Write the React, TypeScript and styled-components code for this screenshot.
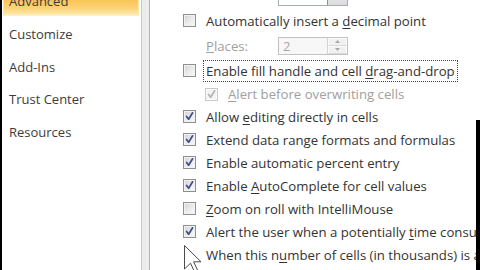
import React from 'react';
import styled, { createGlobalStyle } from 'styled-components';

const GlobalStyle = createGlobalStyle`
  html, body {
    margin: 0;
    padding: 0;
    background: #ffffff;
    overflow: hidden;
  }
  body {
    font-family: 'Open Sans', 'Noto Sans', Arial, sans-serif;
  }
`;

type Option = {
  label: React.ReactNode;
  checked?: boolean;
  disabled?: boolean;
  indent?: boolean;
  focused?: boolean;
  noBox?: boolean;
  h: number;
};

const NAV = ['Advanced', 'Customize', 'Add-Ins', 'Trust Center', 'Resources'];

const OPTIONS: Option[] = [
  {
    label: (
      <>
        Automatically insert a <u>d</u>ecimal point
      </>
    ),
    h: 25,
  },
];

const LIST: Option[] = [
  {
    label: (
      <>
        Enable fill handle and cell <u>d</u>rag-and-drop
      </>
    ),
    focused: true,
    h: 25,
  },
  {
    label: (
      <>
        <u>A</u>lert before overwriting cells
      </>
    ),
    checked: true,
    disabled: true,
    indent: true,
    h: 22,
  },
  {
    label: (
      <>
        Allow <u>e</u>diting directly in cells
      </>
    ),
    checked: true,
    h: 23,
  },
  { label: 'Extend data range formats and formulas', checked: true, h: 23 },
  { label: 'Enable automatic percent entry', checked: true, h: 23 },
  {
    label: (
      <>
        Enable <u>A</u>utoComplete for cell values
      </>
    ),
    checked: true,
    h: 23,
  },
  {
    label: (
      <>
        <u>Z</u>oom on roll with IntelliMouse
      </>
    ),
    h: 23,
  },
  {
    label: (
      <>
        Alert the user when a potentially <u>t</u>ime consuming operation occurs
      </>
    ),
    checked: true,
    h: 23,
  },
  {
    label: (
      <>
        When this n<u>u</u>mber of cells (in thousands) is affected:
      </>
    ),
    noBox: true,
    h: 23,
  },
];

const Check = ({ checked, disabled }: { checked?: boolean; disabled?: boolean }) => (
  <Box $disabled={disabled}>
    {checked && (
      <svg width="11" height="11" viewBox="0 0 11 11">
        <path
          d="M2.6 5.4 L4.6 8.2 L8.6 1.8"
          fill="none"
          stroke={disabled ? '#b4b4b4' : '#3f4f86'}
          strokeWidth="1.7"
          strokeLinejoin="round"
          strokeLinecap="round"
        />
      </svg>
    )}
  </Box>
);

const OptionRow = ({ o }: { o: Option }) => (
  <Row $h={o.h} $indent={o.indent}>
    {o.noBox ? <BoxSpace /> : <Check checked={o.checked} disabled={o.disabled} />}
    <Label $disabled={o.disabled} $focused={o.focused}>
      {o.label}
    </Label>
  </Row>
);

const Spinner = ({ value, dropdown }: { value: string; dropdown?: boolean }) => (
  <Spin $dropdown={dropdown}>
    <SpinValue $dropdown={dropdown}>{value}</SpinValue>
    {dropdown ? (
      <DropButton>
        <svg width="7" height="4" viewBox="0 0 7 4">
          <path d="M0 0 L7 0 L3.5 4 Z" fill="#333" />
        </svg>
      </DropButton>
    ) : (
      <SpinButtons>
        <SpinHalf>
          <svg width="5" height="3" viewBox="0 0 5 3">
            <path d="M0 3 L5 3 L2.5 0 Z" fill="#a8a8a8" />
          </svg>
        </SpinHalf>
        <SpinHalf>
          <svg width="5" height="3" viewBox="0 0 5 3">
            <path d="M0 0 L5 0 L2.5 3 Z" fill="#a8a8a8" />
          </svg>
        </SpinHalf>
      </SpinButtons>
    )}
  </Spin>
);

export default function App() {
  return (
    <>
      <GlobalStyle />
      <Window>
        <LeftEdge />
        <Sidebar>
          <NavList>
            {NAV.map((n, i) => (
              <NavItem key={n} $active={i === 0}>
                {n}
              </NavItem>
            ))}
          </NavList>
        </Sidebar>
        <Splitter />
        <Content>
          <Rows>
            <Row $h={29}>
              <BoxSpace />
              <FieldLabel>Direction:</FieldLabel>
              <Spinner value="Down" dropdown />
            </Row>
            {OPTIONS.map((o, i) => (
              <OptionRow key={i} o={o} />
            ))}
            <Row $h={25}>
              <BoxSpace />
              <FieldLabel $disabled>
                <u>P</u>laces:
              </FieldLabel>
              <Spinner value="2" />
            </Row>
            {LIST.map((o, i) => (
              <OptionRow key={i} o={o} />
            ))}
          </Rows>
          <Pointer width="18" height="28" viewBox="0 0 18 28">
            <path
              d="M0.5 0.5 L0.5 24 L6.5 18.2 L10.6 27 L13.8 25.6 L9.6 16.8 L17 16.8 Z"
              fill="#ffffff"
              stroke="#4a4a4a"
              strokeWidth="1"
              strokeLinejoin="miter"
            />
          </Pointer>
        </Content>
        <RightEdge />
      </Window>
    </>
  );
}

const Window = styled.div`
  display: flex;
  width: 480px;
  height: 270px;
  overflow: hidden;
  background: #ffffff;
`;

const LeftEdge = styled.div`
  width: 2px;
  flex: none;
  background: #000000;
`;

const Sidebar = styled.div`
  width: 139px;
  flex: none;
  background: #ffffff;
  overflow: hidden;
`;

const NavList = styled.div`
  display: flex;
  flex-direction: column;
  margin-top: -14px;
`;

const NavItem = styled.div<{ $active?: boolean }>`
  height: ${(p) => (p.$active ? '30px' : '32.5px')};
  margin-bottom: ${(p) => (p.$active ? '2px' : '0')};
  display: flex;
  align-items: center;
  padding-left: 6px;
  margin-left: 1px;
  margin-right: 2px;
  font-size: 13px;
  color: #3c3c3c;
  border-radius: 0 0 2px 2px;
  background: ${(p) =>
    p.$active
      ? 'linear-gradient(to bottom, #f8bb45 0%, #f9c352 45%, #fbd47a 75%, #fde6a8 92%, #fff3d2 100%)'
      : 'transparent'};
  box-shadow: ${(p) => (p.$active ? 'inset -1px 0 0 #fbe3a4, inset 1px 0 0 #fbe3a4' : 'none')};
`;

const Splitter = styled.div`
  width: 7px;
  flex: none;
  background: #ececec;
  border-left: 1px solid #c9c9c9;
  border-right: 1px solid #b4b4b4;
`;

const Content = styled.div`
  position: relative;
  flex: 1;
  padding-left: 33px;
  overflow: hidden;
`;

const Rows = styled.div`
  display: flex;
  flex-direction: column;
  margin-top: -21px;
`;

const Row = styled.div<{ $h: number; $indent?: boolean }>`
  height: ${(p) => p.$h}px;
  flex: none;
  display: flex;
  align-items: center;
  padding-left: ${(p) => (p.$indent ? '22px' : '0')};
  white-space: nowrap;
`;

const Box = styled.div<{ $disabled?: boolean }>`
  width: 11px;
  height: 11px;
  flex: none;
  display: flex;
  align-items: center;
  justify-content: center;
  border: 1px solid ${(p) => (p.$disabled ? '#c9c9c9' : '#8e8f8f')};
  background: ${(p) =>
    p.$disabled ? '#f4f4f4' : 'linear-gradient(135deg, #cfcfd1 0%, #e8e8ea 45%, #fafafa 100%)'};
  box-shadow: inset 0 0 0 1px ${(p) => (p.$disabled ? '#fbfbfb' : '#f2f2f2')};
`;

const BoxSpace = styled.div`
  width: 13px;
  flex: none;
`;

const Label = styled.span<{ $disabled?: boolean; $focused?: boolean }>`
  margin-left: ${(p) => (p.$focused ? '7px' : '10px')};
  padding: ${(p) => (p.$focused ? '1px 2px' : '0')};
  font-size: 13.2px;
  color: ${(p) => (p.$disabled ? '#a0a0a0' : '#333333')};
  border: ${(p) => (p.$focused ? '1px dotted #444444' : 'none')};

  u {
    text-underline-offset: 2px;
  }
`;

const FieldLabel = styled.span<{ $disabled?: boolean }>`
  width: 72px;
  margin-left: 10px;
  font-size: 13.2px;
  color: ${(p) => (p.$disabled ? '#a0a0a0' : '#333333')};
`;

const Spin = styled.div<{ $dropdown?: boolean }>`
  width: 70px;
  height: ${(p) => (p.$dropdown ? '20px' : '18px')};
  box-sizing: border-box;
  display: flex;
  align-self: ${(p) => (p.$dropdown ? 'flex-end' : 'center')};
  margin-bottom: ${(p) => (p.$dropdown ? '2px' : '0')};
  border: 1px solid ${(p) => (p.$dropdown ? '#a5acb5' : '#c2c2c2')};
  background: ${(p) => (p.$dropdown ? '#ffffff' : '#f7f7f7')};
`;

const SpinValue = styled.span<{ $dropdown?: boolean }>`
  flex: 1;
  padding-left: 4px;
  font-size: 13px;
  line-height: ${(p) => (p.$dropdown ? '13px' : '16px')};
  color: ${(p) => (p.$dropdown ? '#333333' : '#a8a8a8')};
`;

const SpinButtons = styled.div`
  width: 19px;
  display: flex;
  flex-direction: column;
  border-left: 1px solid #d4d4d4;
`;

const SpinHalf = styled.div`
  flex: 1;
  display: flex;
  align-items: center;
  justify-content: center;
  background: #f1f1f1;
  border: 1px solid #fbfbfb;
  border-bottom-color: #d9d9d9;
`;

const DropButton = styled.div`
  width: 19px;
  display: flex;
  align-items: center;
  justify-content: center;
  background: linear-gradient(to bottom, #f2f2f2, #dcdcdc);
  border-left: 1px solid #8f8f8f;
`;

const Pointer = styled.svg`
  position: absolute;
  left: 34px;
  top: 245px;
`;

const RightEdge = styled.div`
  width: 4px;
  flex: none;
  background: linear-gradient(to bottom, #ffffff 0, #ffffff 120px, #000000 120px);
`;
